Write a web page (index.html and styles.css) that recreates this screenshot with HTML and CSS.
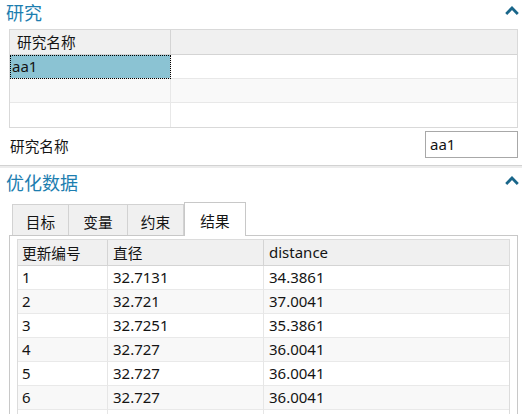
FILE: index.html
```html
<!DOCTYPE html>
<html lang="zh">
<head>
<meta charset="utf-8">
<link rel="stylesheet" href="styles.css">
</head>
<body>
<div class="section-head first">
  <span class="title">研究</span>
  <svg class="chevron" width="14" height="9" viewBox="0 0 14 9"><polyline points="1.2,8 7,2 12.8,8" fill="none" stroke="#19668a" stroke-width="2.8"/></svg>
</div>
<div class="grid-wrap">
  <table class="grid">
    <tr><th class="c1">研究名称</th><th class="c2"></th></tr>
    <tr><td class="c1 selected">aa1</td><td class="c2"></td></tr>
    <tr class="alt"><td class="c1"></td><td class="c2"></td></tr>
    <tr class="last"><td class="c1"></td><td class="c2"></td></tr>
  </table>
</div>
<div class="field-row">
  <span class="label">研究名称</span>
  <div class="input">aa1</div>
</div>
<div class="sep"></div>
<div class="section-head second">
  <span class="title">优化数据</span>
  <svg class="chevron" width="14" height="9" viewBox="0 0 14 9"><polyline points="1.2,8 7,2 12.8,8" fill="none" stroke="#19668a" stroke-width="2.8"/></svg>
</div>
<div class="tabs">
  <div class="tab t1">目标</div>
  <div class="tab t2">变量</div>
  <div class="tab t3">约束</div>
  <div class="tab t4 active">结果</div>
</div>
<div class="panel">
  <table class="data">
    <tr><th class="d1">更新编号</th><th class="d2">直径</th><th class="d3">distance</th></tr>
    <tr><td class="d1">1</td><td class="d2">32.7131</td><td class="d3">34.3861</td></tr>
    <tr class="alt"><td class="d1">2</td><td class="d2">32.721</td><td class="d3">37.0041</td></tr>
    <tr><td class="d1">3</td><td class="d2">32.7251</td><td class="d3">35.3861</td></tr>
    <tr class="alt"><td class="d1">4</td><td class="d2">32.727</td><td class="d3">36.0041</td></tr>
    <tr><td class="d1">5</td><td class="d2">32.727</td><td class="d3">36.0041</td></tr>
    <tr class="alt"><td class="d1">6</td><td class="d2">32.727</td><td class="d3">36.0041</td></tr>
    <tr><td class="d1"></td><td class="d2"></td><td class="d3"></td></tr>
  </table>
</div>
</body>
</html>
```

FILE: styles.css
```css
html, body {
  margin: 0;
  padding: 0;
  background: #ffffff;
  overflow: hidden;
}
body {
  font-family: "Noto Sans", "Noto Sans CJK SC", sans-serif;
  font-size: 14.67px;
  color: #141414;
  width: 522px;
  height: 415px;
}

.section-head {
  display: flex;
  justify-content: space-between;
  align-items: flex-start;
  box-sizing: border-box;
  padding-left: 6px;
}
.section-head.first {
  height: 29px;
}
.section-head.second {
  height: 34px;
  padding-top: 2px;
}
.title {
  font-size: 18px;
  line-height: 24px;
  color: #1d7eb0;
  font-family: "Noto Sans CJK SC", sans-serif;
}
.chevron {
  display: block;
  margin-right: 3px;
}
.first .chevron { margin-top: 6px; }
.second .chevron { margin-top: 6px; }

.grid-wrap {
  margin: 0 4px 0 9px;
}
table {
  border-collapse: separate;
  border-spacing: 0;
  width: 100%;
  table-layout: fixed;
}
.grid {
  border: 1px solid #d9d9d9;
}
.grid th, .grid td {
  padding: 0;
  text-align: left;
  font-weight: normal;
  white-space: nowrap;
  overflow: hidden;
}
.grid th {
  height: 24px;
  background: #f0f0f0;
  border-bottom: 1px solid #d4d4d4;
  padding-left: 7px;
  line-height: 24px;
}
.grid th.c1 { border-right: 1px solid #d4d4d4; width: 153px; }
.grid td {
  height: 23px;
  line-height: 23px;
  border-bottom: 1px solid #e8e8e8;
  padding-left: 2px;
  font-size: 15px;
}
.grid td.c1 { border-right: 1px solid #e8e8e8; }
.grid tr.last td { border-bottom: none; height: 24px; }
.grid tr.alt td { background: #f9f9f9; }
.grid td.selected {
  background: #8bc3d3;
  outline: 1px dotted #000000;
  outline-offset: -1px;
}

.field-row {
  display: flex;
  justify-content: space-between;
  align-items: center;
  padding: 3px 4px 7px 10px;
}
.label {
  font-family: "Noto Sans CJK SC", sans-serif;
  padding-top: 1px;
}
.input {
  box-sizing: border-box;
  width: 93px;
  height: 27px;
  border: 1px solid #a8a8a8;
  padding-left: 4px;
  line-height: 25px;
  background: #ffffff;
  font-size: 15px;
}

.sep {
  height: 2px;
  border-top: 1px solid #d2d2d2;
  background: #ececec;
}

.tabs {
  display: flex;
  align-items: flex-end;
  padding-left: 12px;
  height: 33px;
}
.tab {
  box-sizing: border-box;
  height: 31px;
  border: 1px solid #d2d2d2;
  border-bottom: none;
  background: #f0f0f0;
  text-align: center;
  line-height: 30px;
  padding-top: 2px;
  font-family: "Noto Sans CJK SC", sans-serif;
}
.t1 { width: 57px; }
.t2 { width: 59px; border-left: none; }
.t3 { width: 56px; border-left: none; }
.t4 { width: 62px; }
.tab.active {
  position: relative;
  z-index: 1;
  height: 34px;
  margin-bottom: -1px;
  background: #ffffff;
  padding-top: 1px;
  line-height: 33px;
  border-color: #c8c8c8;
}

.panel {
  margin: 0 4px 0 9px;
  border: 1px solid #c8c8c8;
  border-bottom: none;
  padding: 3px 7px 0 7px;
  height: 175px;
  overflow: hidden;
}
.data {
  border: 1px solid #dcdcdc;
  border-bottom: none;
}
.data th, .data td {
  padding: 0 0 0 5px;
  text-align: left;
  font-weight: normal;
  white-space: nowrap;
  overflow: hidden;
}
.data th {
  height: 25px;
  line-height: 25px;
  background: #f0f0f0;
  border-bottom: 1px solid #d4d4d4;
  font-family: "Noto Sans CJK SC", sans-serif;
}
.data th.d3 { font-family: "Noto Sans", sans-serif; font-size: 15px; }
.data td {
  height: 23px;
  line-height: 23px;
  border-bottom: 1px solid #e9e9e9;
  font-size: 15px;
}
.data th.d1, .data th.d2 { border-right: 1px solid #d4d4d4; }
.data td.d1, .data td.d2 { border-right: 1px solid #e6e6e6; }
.data .d1 { width: 85px; padding-left: 4px; }
.data .d2 { width: 150px; }
.data tr.alt td { background: #f8f8f8; }
```
